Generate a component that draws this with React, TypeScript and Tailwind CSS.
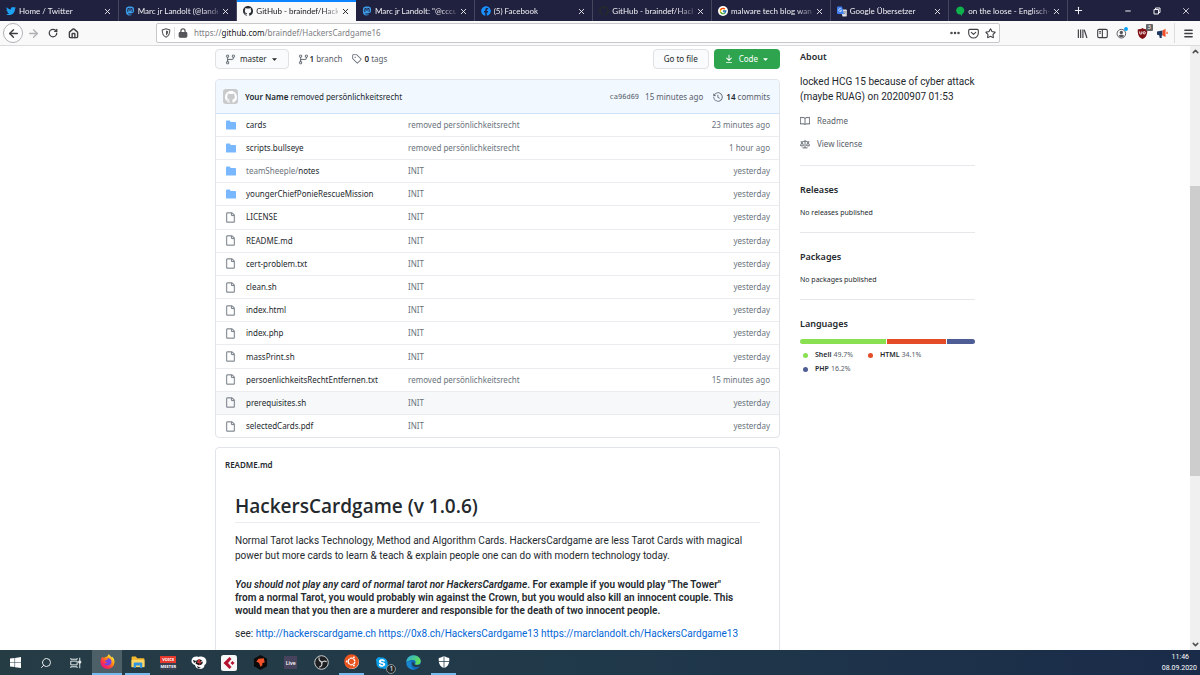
import type { ReactNode } from "react";
import { FaTwitter, FaMastodon, FaFacebook, FaSkype, FaUbuntu } from "react-icons/fa";
import { FcGoogle } from "react-icons/fc";
import {
  GoGitBranch,
  GoTag,
  GoFile,
  GoBook,
  GoLaw,
  GoHistory,
  GoFileDirectoryFill,
  GoTriangleDown,
} from "react-icons/go";
import {
  ArrowLeft,
  ArrowRight,
  ChevronDown,
  ChevronUp,
  Ellipsis,
  House,
  Lock,
  Menu,
  Minus,
  Plus,
  RotateCw,
  Search,
  Star,
  X,
} from "lucide-react";

function GithubMark({ className }: { className: string }) {
  return (
    <svg viewBox="0 0 16 16" className={className} fill="currentColor" aria-hidden="true">
      <path
        fillRule="evenodd"
        d="M8 0C3.580 0 0 3.580 0 8c0 3.540 2.290 6.530 5.470 7.590.4.070.55-.17.55-.38 0-.19-.01-.82-.01-1.490-2.010.37-2.530-.49-2.690-.94-.09-.23-.48-.94-.82-1.130-.28-.15-.68-.52-.01-.53.63-.01 1.080.58 1.230.82.72 1.210 1.870.87 2.330.66.070-.52.28-.87.51-1.070-1.780-.2-3.640-.89-3.640-3.950 0-.87.31-1.590.82-2.150-.08-.2-.36-1.020.08-2.120 0 0 .67-.21 2.200.82.64-.18 1.320-.27 2-.27s1.360.09 2 .27c1.530-1.040 2.200-.82 2.200-.82.44 1.100.16 1.920.08 2.120.51.56.82 1.270.82 2.150 0 3.070-1.870 3.750-3.650 3.950.29.25.54.73.54 1.480 0 1.070-.01 1.930-.01 2.200 0 .21.15.46.55.38A8.013 8.013 0 0 0 16 8c0-4.420-3.580-8-8-8z"
      />
    </svg>
  );
}

/* ---------- browser tabs ---------- */

function TranslateIcon() {
  return (
    <svg viewBox="0 0 20 20" className="size-[11px]" aria-hidden="true">
      <path d="M7 6h11a1.500 1.500 0 0 1 1.500 1.500v11a1.500 1.500 0 0 1-1.500 1.500H11z" fill="#dfe3e8" />
      <path d="M2 0h8l4 15H2a2 2 0 0 1-2-2V2a2 2 0 0 1 2-2z" fill="#3f7ef0" />
      <path d="M8.800 5.300A3 3 0 1 0 9.300 8H6.600" fill="none" stroke="#fff" strokeWidth="1.300" />
      <path d="M12.500 10.500h5.500M15.200 9v1.500M17 10.500c-.5 2.500-2 4-3.500 5M14 12c.8 1.800 2 3 3.500 3.800" fill="none" stroke="#6b7684" strokeWidth="1.100" />
    </svg>
  );
}

function SpeechIcon() {
  return (
    <svg viewBox="0 0 20 20" className="size-[10px]" aria-hidden="true">
      <path d="M10 1a8.500 8 0 0 1 5 14.500L13 20l-1.500-3A8.500 8 0 1 1 10 1z" fill="#0eb14b" />
    </svg>
  );
}

type Tab = { title: string; icon: ReactNode; active?: boolean };

const tabs: Tab[] = [
  { title: "Home / Twitter", icon: <FaTwitter className="size-[10px] text-[#1da1f2]" /> },
  { title: "Marc jr Landolt (@lande", icon: <FaMastodon className="size-[10px] text-[#3b9be6]" /> },
  { title: "GitHub - braindef/Hacke", icon: <GithubMark className="size-[10px] text-[#24292e]" />, active: true },
  { title: 'Marc jr Landolt: "@cccu', icon: <FaMastodon className="size-[10px] text-[#3b9be6]" /> },
  { title: "(5) Facebook", icon: <FaFacebook className="size-[10px] text-[#1890ff]" /> },
  { title: "GitHub - braindef/Hacke", icon: <GithubMark className="size-[10px] text-[#24292e]" /> },
  {
    title: "malware tech blog wann",
    icon: (
      <span className="flex size-[10px] items-center justify-center rounded-full bg-white">
        <FcGoogle className="size-[8px]" />
      </span>
    ),
  },
  { title: "Google Übersetzer", icon: <TranslateIcon /> },
  { title: "on the loose - Englisch-D", icon: <SpeechIcon /> },
];

function RestoreIcon() {
  return (
    <svg viewBox="0 0 8 8" className="size-[8px]" fill="none" stroke="currentColor" aria-hidden="true">
      <path d="M1 2.500h4.500V7H1zM2.500 2.500V1H7v4.500H5.500" />
    </svg>
  );
}

function TabStrip() {
  return (
    <div className="flex h-[21px] shrink-0 bg-[#20203f] font-['Lato',sans-serif] text-[#f1f1f5]">
      <div className="grid w-[89%] grid-cols-9" role="tablist">
        {tabs.map((tab, i) => (
          <div
            key={i}
            role="tab"
            aria-selected={!!tab.active}
            className={
              tab.active
                ? "flex min-w-0 items-center gap-[3px] border-t-2 border-[#0a84ff] bg-[#f9f9fa] pb-px pl-[6px] pr-[6px] text-[#15151a]"
                : "flex min-w-0 items-center gap-[3px] border-r border-[#46465f] pl-[6px] pr-[6px] pt-px"
            }
          >
            <span className="flex w-[10px] shrink-0 justify-center">{tab.icon}</span>
            <span className="min-w-0 flex-1 whitespace-nowrap [mask-image:linear-gradient(to_right,#000_80%,#0004)]">
              {tab.title}
            </span>
            <button type="button" aria-label="Close tab" className="shrink-0">
              <X className="size-[9px]" strokeWidth={2.400} />
            </button>
          </div>
        ))}
      </div>
      <button type="button" aria-label="New tab" className="flex w-5 items-center justify-center">
        <Plus className="size-[11px]" strokeWidth={2.200} />
      </button>
      <div className="ml-auto flex items-center">
        <button type="button" aria-label="Minimize" className="flex w-[29px] justify-center">
          <Minus className="size-[8px]" strokeWidth={3} />
        </button>
        <button type="button" aria-label="Restore" className="flex w-[29px] justify-center">
          <RestoreIcon />
        </button>
        <button type="button" aria-label="Close window" className="flex w-[29px] justify-center">
          <X className="size-[10px]" strokeWidth={2} />
        </button>
      </div>
    </div>
  );
}

/* ---------- navigation toolbar ---------- */

function ShieldIcon() {
  return (
    <svg viewBox="0 0 16 16" className="size-[10px]" aria-hidden="true">
      <path d="M8 1.300 14 3c.3 5.500-1.300 9.500-6 11.700C3.300 12.500 1.700 8.500 2 3z" fill="none" stroke="#55555a" strokeWidth="1.700" />
      <path d="M8 4v8c2.400-1.500 3.400-4 3.400-6.900z" fill="#55555a" />
    </svg>
  );
}

function PocketIcon() {
  return (
    <svg viewBox="0 0 16 16" className="size-[11px]" fill="none" stroke="currentColor" strokeWidth="1.600" strokeLinecap="round" strokeLinejoin="round" aria-hidden="true">
      <path d="M2.500 2h11A1.500 1.500 0 0 1 15 3.500V7.500a7 7 0 0 1-14 0V3.500A1.500 1.500 0 0 1 2.500 2z" />
      <path d="M4.800 6.300 8 9.300l3.200-3" />
    </svg>
  );
}

function LibraryIcon() {
  return (
    <svg viewBox="0 0 16 16" className="size-[11px]" fill="none" stroke="currentColor" strokeWidth="1.700" aria-hidden="true">
      <path d="M2 2v12.500M5.300 2v12.500M8.600 2v12.500M10.500 2.500l4 12" />
    </svg>
  );
}

function SidebarIcon() {
  return (
    <svg viewBox="0 0 16 16" className="size-[11px]" fill="none" stroke="currentColor" strokeWidth="1.600" aria-hidden="true">
      <rect x="1" y="2" width="14" height="12" rx="2" />
      <path d="M7.800 2v12M3.300 5h2.300M3.300 7.500h2.300" />
    </svg>
  );
}

function AccountIcon() {
  return (
    <svg viewBox="0 0 18 18" className="size-[12px]" aria-hidden="true">
      <circle cx="8" cy="10" r="6.500" fill="none" stroke="#55555a" strokeWidth="1.400" />
      <circle cx="8" cy="8.200" r="2.500" fill="#55555a" />
      <path d="M3.800 13.500c1-2.600 7.400-2.600 8.400 0-2 2.300-6.400 2.300-8.400 0z" fill="#55555a" />
      <circle cx="15" cy="3" r="2.900" fill="#00a3f5" />
    </svg>
  );
}

function BlockerIcon() {
  return (
    <svg viewBox="0 0 16 16" className="size-[11px]" aria-hidden="true">
      <path d="M8 0c2 1.500 4.500 2 7 2 0 7-1 11-7 14C2 13 1 9 1 2c2.500 0 5-.5 7-2z" fill="#800f14" />
      <path d="M4 5v2.500a1.500 1.500 0 0 0 3 0V5" fill="none" stroke="#fff" strokeWidth="1.300" />
      <circle cx="10.500" cy="7" r="1.700" fill="none" stroke="#fff" strokeWidth="1.300" />
    </svg>
  );
}

function MegaphoneIcon() {
  return (
    <svg viewBox="0 0 18 16" className="h-[10px] w-[11px]" aria-hidden="true">
      <path d="M0 5.500 9 4v8H7.500L8 16H4.500L3.500 11.500 0 11z" fill="#1e3a63" />
      <path d="M9 4 14 1v13.500L9 12z" fill="#f0502a" />
      <path d="M15 6h3v3.500h-3z" fill="#f58a6d" />
    </svg>
  );
}

function Toolbar() {
  return (
    <div className="flex h-[25px] shrink-0 items-center border-b border-[#dcdcde] bg-[#f9f9fa] pl-[3px] pr-[6px] text-[#3f3f44]">
      <button type="button" aria-label="Back" className="flex size-[20px] items-center justify-center rounded-full border border-[#b1b1b5] bg-white">
        <ArrowLeft className="size-[13px]" strokeWidth={2.600} />
      </button>
      <button type="button" aria-label="Forward" className="flex w-5 justify-center text-[#b0b0b3]">
        <ArrowRight className="size-[13px]" strokeWidth={2.400} />
      </button>
      <button type="button" aria-label="Reload" className="flex w-5 justify-center">
        <RotateCw className="size-[10px]" strokeWidth={3} />
      </button>
      <button type="button" aria-label="Home" className="flex w-5 justify-center">
        <House className="size-[11px]" strokeWidth={3} />
      </button>
      <div className="ml-[73px] flex h-[20px] min-w-0 flex-1 items-center rounded-[2px] border border-[#c8c8cb] bg-white pl-1 pr-px">
        <ShieldIcon />
        <span className="mx-[3px] h-3 w-px bg-[#e0e0e2]" />
        <Lock className="size-[10px] text-[#55555a] [&>rect]:fill-current" strokeWidth={3} />
        <button type="button" className="ml-[6px] flex-1 whitespace-nowrap text-left text-[8px] leading-3 text-[#7c7c82]">
          https://<span className="text-[#15151a]">github.com</span>/braindef/HackersCardgame16
        </button>
        <button type="button" aria-label="Page actions" className="flex w-[18px] justify-center">
          <Ellipsis className="size-[12px]" strokeWidth={3} />
        </button>
        <button type="button" aria-label="Save to Pocket" className="flex w-[18px] justify-center">
          <PocketIcon />
        </button>
        <button type="button" aria-label="Bookmark" className="flex w-[16px] justify-center">
          <Star className="size-[11px]" strokeWidth={2.400} />
        </button>
      </div>
      <div className="ml-[72px] flex items-center">
        <button type="button" aria-label="Library" className="flex w-5 justify-center"><LibraryIcon /></button>
        <button type="button" aria-label="Sidebars" className="flex w-5 justify-center"><SidebarIcon /></button>
        <button type="button" aria-label="Account" className="flex w-5 justify-center"><AccountIcon /></button>
        <button type="button" aria-label="Content blocker" className="relative flex w-5 justify-center">
          <BlockerIcon />
          <span className="absolute -right-px -top-1 rounded-[1px] bg-[#666] px-[2px] text-[6px] leading-[7px] text-white">3</span>
        </button>
        <button type="button" aria-label="Announcements" className="flex w-5 justify-center"><MegaphoneIcon /></button>
        <span className="ml-[2px] h-5 w-px bg-[#dddde0]" />
        <button type="button" aria-label="Menu" className="ml-[8px]">
          <Menu className="size-[11px]" strokeWidth={3} />
        </button>
      </div>
    </div>
  );
}

/* ---------- repository page ---------- */

type Entry = { dir?: boolean; prefix?: string; name: string; message: string; age: string; hovered?: boolean };

const entries: Entry[] = [
  { dir: true, name: "cards", message: "removed persönlichkeitsrecht", age: "23 minutes ago" },
  { dir: true, name: "scripts.bullseye", message: "removed persönlichkeitsrecht", age: "1 hour ago" },
  { dir: true, prefix: "teamSheeple/", name: "notes", message: "INIT", age: "yesterday" },
  { dir: true, name: "youngerChiefPonieRescueMission", message: "INIT", age: "yesterday" },
  { name: "LICENSE", message: "INIT", age: "yesterday" },
  { name: "README.md", message: "INIT", age: "yesterday" },
  { name: "cert-problem.txt", message: "INIT", age: "yesterday" },
  { name: "clean.sh", message: "INIT", age: "yesterday" },
  { name: "index.html", message: "INIT", age: "yesterday" },
  { name: "index.php", message: "INIT", age: "yesterday" },
  { name: "massPrint.sh", message: "INIT", age: "yesterday" },
  { name: "persoenlichkeitsRechtEntfernen.txt", message: "removed persönlichkeitsrecht", age: "15 minutes ago" },
  { name: "prerequisites.sh", message: "INIT", age: "yesterday", hovered: true },
  { name: "selectedCards.pdf", message: "INIT", age: "yesterday" },
];

function DownloadIcon() {
  return (
    <svg viewBox="0 0 16 16" className="size-[10px]" fill="currentColor" aria-hidden="true">
      <path d="M7.470 10.780a.75.75 0 0 0 1.060 0l3.750-3.750a.75.75 0 0 0-1.060-1.060L8.750 8.440V1.750a.75.75 0 0 0-1.500 0v6.690L4.780 5.970a.75.75 0 0 0-1.060 1.060l3.750 3.750zM3.750 13a.75.75 0 0 0 0 1.500h8.500a.75.75 0 0 0 0-1.500h-8.500z" />
    </svg>
  );
}

function RepoActions() {
  return (
    <div className="flex items-center">
      <button type="button" className="flex h-[20px] items-center rounded-[4px] border border-[#dfe1e4] bg-[#fafbfc] px-[9px]">
        <GoGitBranch className="size-[11px] stroke-current text-[#586069] [stroke-width:0.4]" />
        <span className="ml-[4px]">master</span>
        <GoTriangleDown className="ml-[3px] size-[9px]" />
      </button>
      <a href="#branches" className="ml-[9px] flex items-center text-[#586069]">
        <GoGitBranch className="mr-px size-[11px] stroke-current [stroke-width:0.4]" />
        <span><strong className="font-semibold text-[#24292e]">1</strong> branch</span>
      </a>
      <a href="#tags" className="ml-[10px] flex items-center text-[#586069]">
        <GoTag className="mr-[2px] size-[10px] stroke-current [stroke-width:0.4]" />
        <span><strong className="font-semibold text-[#24292e]">0</strong> tags</span>
      </a>
      <button type="button" className="ml-auto h-[20px] rounded-[4px] border border-[#dfe1e4] bg-[#fafbfc] px-[10px]">
        Go to file
      </button>
      <button type="button" className="ml-[5px] flex h-[20px] items-center rounded-[4px] bg-[#2ea44f] px-[10px] text-white">
        <DownloadIcon />
        <span className="ml-[5px]">Code</span>
        <GoTriangleDown className="ml-[3px] size-[9px]" />
      </button>
    </div>
  );
}

function FileBrowser() {
  return (
    <section className="mt-[10px] overflow-hidden rounded-[4px] border border-[#e1e4e8]">
      <div className="flex h-[34px] items-center border-b border-[#cfe3f8] bg-[#f1f8ff] pl-[7px] pr-[9px]">
        <span className="mr-[7px] flex size-[15px] items-center justify-center rounded-[3px] bg-[#c9cacb] text-white">
          <GithubMark className="size-[12px]" />
        </span>
        <span>
          <a href="#author" className="font-semibold">Your Name</a> <a href="#commit">removed persönlichkeitsrecht</a>
        </span>
        <a href="#ca96d69" className="ml-auto font-['DejaVu_Sans_Mono',monospace] text-[7px] text-[#586069]">ca96d69</a>
        <span className="ml-[6px] text-[#586069]">15 minutes ago</span>
        <a href="#commits" className="ml-[10px] flex items-center text-[#586069]">
          <GoHistory className="mr-[3px] size-[10px] stroke-current [stroke-width:0.4]" />
          <span><strong className="font-semibold text-[#24292e]">14</strong> commits</span>
        </a>
      </div>
      <table className="h-[323px] w-full table-fixed border-collapse">
        <tbody>
          {entries.map((entry) => (
            <tr
              key={entry.name}
              className={
                entry.hovered
                  ? "border-t border-[#eaecef] bg-[#f6f8fa]"
                  : "border-t border-[#eaecef] first:border-t-0"
              }
            >
              <td className="w-[30px] py-0 pl-[9px]">
                {entry.dir ? (
                  <GoFileDirectoryFill className="size-[12px] text-[#79b8ff]" />
                ) : (
                  <GoFile className="size-[11px] stroke-current text-[#6a737d] [stroke-width:0.5]" />
                )}
              </td>
              <td className="w-[162px] p-0">
                <a href={"#" + entry.name}>
                  {entry.prefix && <span className="text-[#6a737d]">{entry.prefix}</span>}
                  {entry.name}
                </a>
              </td>
              <td className="p-0 text-[#6a737d]">{entry.message}</td>
              <td className="w-[110px] py-0 pr-[9px] text-right text-[#6a737d]">{entry.age}</td>
            </tr>
          ))}
        </tbody>
      </table>
    </section>
  );
}

function Readme() {
  return (
    <section className="mt-[9px] rounded-t-[4px] border border-[#e1e4e8]">
      <h2 className="px-[9px] pt-[11px] text-[8px] font-semibold leading-3">README.md</h2>
      <article className="px-[19px] pb-10 pt-[23px] font-['Roboto',sans-serif] text-[10px] leading-[15px]">
        <h1 className="border-b border-[#eaecef] pb-[4px] font-['Open_Sans',sans-serif] text-[19px] font-semibold leading-6">
          HackersCardgame (v 1.0.6)
        </h1>
        <p className="mt-[10px]">
          Normal Tarot lacks Technology, Method and Algorithm Cards. HackersCardgame are less Tarot Cards with magical
          <br />
          power but more cards to learn &amp; teach &amp; explain people one can do with modern technology today.
        </p>
        <p className="mt-[15px] font-semibold leading-[13px]">
          <em>You should not play any card of normal tarot nor HackersCardgame</em>. For example if you would play "The Tower"
          <br />
          from a normal Tarot, you would probably win against the Crown, but you would also kill an innocent couple. This
          <br />
          would mean that you then are a murderer and responsible for the death of two innocent people.
        </p>
        <p className="mt-[9px]">
          see:{" "}
          <a href="#site" className="text-[#0366d6]">http://hackerscardgame.ch</a>{" "}
          <a href="#mirror" className="text-[#0366d6]">https://0x8.ch/HackersCardgame13</a>{" "}
          <a href="#author-site" className="text-[#0366d6]">https://marclandolt.ch/HackersCardgame13</a>
        </p>
      </article>
    </section>
  );
}

const languages = [
  { name: "Shell", share: 49.7, bar: "bg-[#89e051]" },
  { name: "HTML", share: 34.1, bar: "bg-[#e34c26]" },
  { name: "PHP", share: 16.2, bar: "bg-[#4f5d95]" },
];

function Sidebar() {
  return (
    <aside className="w-[175px] shrink-0">
      <section className="border-b border-[#e6e8eb] pb-[15px]">
        <h2 className="text-[9px] font-semibold leading-[15px]">About</h2>
        <p className="mt-[10px] whitespace-nowrap font-['Roboto',sans-serif] text-[10px] leading-[15px]">
          locked HCG 15 because of cyber attack
          <br />
          (maybe RUAG) on 20200907 01:53
        </p>
        <a href="#readme" className="mt-[10px] flex items-center gap-[7px] leading-[13px] text-[#586069]">
          <GoBook className="size-[10px] stroke-current [stroke-width:0.4]" />
          Readme
        </a>
        <a href="#license" className="mt-[10px] flex items-center gap-[7px] leading-[13px] text-[#586069]">
          <GoLaw className="size-[10px] stroke-current [stroke-width:0.4]" />
          View license
        </a>
      </section>
      <section className="border-b border-[#e6e8eb] pb-[14px] pt-[16px]">
        <h2 className="text-[9px] font-semibold leading-[15px]">Releases</h2>
        <p className="mt-[10px] text-[7px] leading-[11px]">No releases published</p>
      </section>
      <section className="border-b border-[#e6e8eb] pb-[14px] pt-[16px]">
        <h2 className="text-[9px] font-semibold leading-[15px]">Packages</h2>
        <p className="mt-[10px] text-[7px] leading-[11px]">No packages published</p>
      </section>
      <section className="pt-[16px]">
        <h2 className="text-[9px] font-semibold leading-[15px]">Languages</h2>
        <div className="mt-[8px] flex h-[5px] gap-px overflow-hidden rounded-full">
          {languages.map((l) => (
            <span key={l.name} className={l.bar} style={{ width: l.share + "%" }} />
          ))}
        </div>
        <ul className="mt-[4px] flex flex-wrap text-[7px] leading-[14px]">
          {languages.map((l) => (
            <li key={l.name} className="mr-[9px] flex w-[56px] items-center whitespace-nowrap">
              <span className={"ml-[3px] mr-[7px] size-[5px] shrink-0 rounded-full " + l.bar} />
              <span className="mr-[2px] font-semibold">{l.name}</span>
              <span className="text-[#586069]">{l.share}%</span>
            </li>
          ))}
        </ul>
      </section>
    </aside>
  );
}

/* ---------- taskbar ---------- */

function WindowsIcon() {
  return (
    <svg viewBox="0 0 16 16" className="size-[11px]" fill="#fff" aria-hidden="true">
      <path d="M0 2.300 6.600 1.400v6.200H0zM7.400 1.300 16 0v7.600H7.400zM0 8.400h6.600v6.200L0 13.700zM7.400 8.400H16V16l-8.600-1.200z" />
    </svg>
  );
}

function TaskViewIcon() {
  return (
    <svg viewBox="0 0 16 16" className="size-[12px]" fill="none" stroke="#e8ecee" strokeWidth="1.300" aria-hidden="true">
      <path d="M1 5.500h8.500v5H1zM1 1.500V3h8.500V1.500M1 14.500V13h8.500v1.500M13 1v14" />
      <path d="M11.700 5.500h2.600v2.500h-2.600z" fill="#e8ecee" />
    </svg>
  );
}

function FirefoxIcon() {
  return (
    <svg viewBox="0 0 32 32" className="size-[15px]" aria-hidden="true">
      <defs>
        <linearGradient id="fx" x1="0.850" y1="0.100" x2="0.150" y2="0.900">
          <stop offset="0" stopColor="#fff44f" />
          <stop offset="0.350" stopColor="#ff980e" />
          <stop offset="0.700" stopColor="#ff3647" />
          <stop offset="1" stopColor="#e31587" />
        </linearGradient>
      </defs>
      <path d="M5 6c1 1.500 2 2 3 2.200C10 6.500 12 6 14 6c2-1 3-3 4.500-6 2 3 5 5 6.500 7.500.5-.5.500-1 .5-2C29.500 9 31 13 31 17a15 15 0 0 1-30 0C1 12.500 3 9 5 6z" fill="url(#fx)" />
      <path d="M16 9c5-1 9 3 8.500 8a8.500 8.500 0 0 1-16.500 2c3 2 6 1.500 8-.5-2-.5-4-1-5-3 0-2 2-2 5-3z" fill="#7542e5" />
    </svg>
  );
}

function ExplorerIcon() {
  return (
    <svg viewBox="0 0 32 28" className="h-[12px] w-[14px]" aria-hidden="true">
      <path d="M1 3a2 2 0 0 1 2-2h8l3 4h15a2 2 0 0 1 2 2v18H1z" fill="#f5b92e" />
      <path d="M1 9h30v17H1z" fill="#ffd766" />
      <path d="M6 28V17a2 2 0 0 1 2-2h16a2 2 0 0 1 2 2v11h-5v-6H11v6z" fill="#2f95e0" />
    </svg>
  );
}

function VoicemeeterIcon() {
  return (
    <span className="flex w-[16px] flex-col text-center text-[4px] font-bold leading-[7px] text-white">
      <span className="bg-[#e5392d]">VOICE</span>
      <span className="bg-[#3a3f52]">MEETER</span>
    </span>
  );
}

function SplashIcon() {
  return (
    <svg viewBox="0 0 32 28" className="h-[14px] w-[16px]" aria-hidden="true">
      <path d="M2 6c3-5 8-6 13-4 6-2 13 0 15 5 2 6 0 9-3 11 0 5-4 8-9 8s-9-3-10-8C3 17-1 12 2 6z" fill="#fff" />
      <path d="M11 9c4-3 9-2 12 1 2 4-1 7-4 8-4 1-8-1-10-3z" fill="#17191c" />
      <path d="M14 7l-2 7h5l-2 6 7-9h-5l2-4z" fill="#c8383a" />
      <path d="M4 8l7 2-5 4zM12 20l8 4-6 1z" fill="#17191c" />
      <path d="M20 10l4-1-2 4z" fill="#fff" />
    </svg>
  );
}

function CubaseIcon() {
  return (
    <svg viewBox="0 0 32 32" className="size-[16px]" aria-hidden="true">
      <rect width="32" height="32" rx="5" fill="#f7f7f7" />
      <path d="M17 4 5 16l12 12 4-4-7-8 7-8z" fill="#b5122f" />
      <path d="M19 16l4-4 4 4-4 4z" fill="#b5122f" />
    </svg>
  );
}

function ReaperIcon() {
  return (
    <svg viewBox="0 0 32 32" className="size-[15px]" aria-hidden="true">
      <path d="M16 0 30 8v16l-14 8L2 24V8z" fill="#0b0b0c" />
      <path d="M7 14l5-6 11-1 2 9-5 1v5l-4 3-3-8z" fill="#f0522a" />
    </svg>
  );
}

function ObsIcon() {
  return (
    <svg viewBox="0 0 32 32" className="size-[15px]" aria-hidden="true">
      <circle cx="16" cy="16" r="14.500" fill="#1d1f22" stroke="#d5d5d5" strokeWidth="2" />
      <g fill="none" stroke="#d0d0d0" strokeWidth="2.600">
        <path d="M11 5c-1 5 1 9 6 10" />
        <path d="M27 14c-5-2-9-1-11 4" />
        <path d="M11 26c5-1 7-5 5-10" />
      </g>
    </svg>
  );
}

function UbuntuIcon() {
  return (
    <span className="flex size-[14px] items-center justify-center rounded-full bg-white">
      <FaUbuntu className="size-[15px] shrink-0 text-[#e9541f]" />
    </span>
  );
}

function SkypeIcon() {
  return (
    <span className="relative flex">
      <FaSkype className="size-[14px] rounded-full bg-[radial-gradient(circle,#fff_50%,transparent_51%)] text-[#0c9fe8]" />
      <span className="absolute -bottom-1 -right-[7px] flex size-[10px] items-center justify-center rounded-full border border-[#8b9598] bg-[#22282c] text-[7px] leading-none text-white">
        1
      </span>
    </span>
  );
}

function EdgeIcon() {
  return (
    <svg viewBox="0 0 32 32" className="size-[15px]" aria-hidden="true">
      <defs>
        <linearGradient id="edgeTop" x1="0" y1="0" x2="1" y2="0.400">
          <stop offset="0" stopColor="#2aa8e0" />
          <stop offset="1" stopColor="#5fe05a" />
        </linearGradient>
      </defs>
      <circle cx="16" cy="16" r="15.500" fill="#1168b8" />
      <path d="M.5 16C1 7 7 .5 16 .5S31.500 7 31.500 13.500c0 5-4 7.500-8 7.500-4.500 0-5-2-3.500-3.500 2-2.500 0-7-5-7C8 10.500 1 14 .5 16z" fill="url(#edgeTop)" />
      <path d="M13 16c-1 8 6 12 15 8.500l3-2 1-4c-2 2-5 3-8.500 3-4.500 0-6.500-2-5.500-5z" fill="#263c46" />
      <path d="M11 15c-2 9 4 15 10 15.500-9 2.500-18-3-20-11C2 13 8 12 11 15z" fill="#1b86d0" />
    </svg>
  );
}

function DefenderIcon() {
  return (
    <svg viewBox="0 0 16 16" className="size-[12px]" fill="#fff" aria-hidden="true">
      <path d="M7.500 0v7H1V2.500C3.500 2.500 5.500 1.500 7.500 0zM8.500 0v7H15V2.500C12.500 2.500 10.500 1.500 8.500 0zM7.500 8v8C4 14.300 1.800 12 1.100 8zM8.500 8v8c3.500-1.700 5.700-4 6.400-8z" />
    </svg>
  );
}

type Task = { label: string; icon: ReactNode; state?: "running" | "active" };

const tasks: Task[] = [
  { label: "Start", icon: <WindowsIcon /> },
  { label: "Search", icon: <Search className="size-[12px] -scale-x-100 text-[#e8ecee]" strokeWidth={2} /> },
  { label: "Task view", icon: <TaskViewIcon /> },
  { label: "Firefox", icon: <FirefoxIcon />, state: "active" },
  { label: "Explorer", icon: <ExplorerIcon />, state: "running" },
  { label: "Voicemeeter", icon: <VoicemeeterIcon /> },
  { label: "Lightning", icon: <SplashIcon /> },
  { label: "Cubase", icon: <CubaseIcon /> },
  { label: "Reaper", icon: <ReaperIcon /> },
  {
    label: "Ableton",
    icon: <span className="flex h-[13px] w-[13px] items-center justify-center bg-[#47435c] text-[5px] font-semibold text-white">Live</span>,
  },
  { label: "OBS Studio", icon: <ObsIcon /> },
  { label: "Ubuntu", icon: <UbuntuIcon />, state: "running" },
  { label: "Skype", icon: <SkypeIcon /> },
  { label: "Edge", icon: <EdgeIcon /> },
  { label: "Windows Security", icon: <DefenderIcon />, state: "running" },
];

function Taskbar() {
  return (
    <footer className="flex h-[25px] shrink-0 bg-[linear-gradient(to_right,#263c45,#20394a_50%,#1a2b49)] text-white">
      <div className="grid w-[38.25%] grid-cols-15">
        {tasks.map((task) => (
          <button
            key={task.label}
            type="button"
            aria-label={task.label}
            className={
              task.state === "active"
                ? "flex flex-col items-center bg-[#4d5f67]"
                : "flex flex-col items-center"
            }
          >
            <span className="flex flex-1 items-center">{task.icon}</span>
            <span
              className={
                task.state === "active"
                  ? "h-[2px] w-full bg-[#76b9ed]"
                  : task.state === "running"
                    ? "h-[2px] w-[25px] bg-[#76b9ed]"
                    : "h-0"
              }
            />
          </button>
        ))}
      </div>
      <time className="ml-auto flex flex-col items-end justify-center pr-[3px] font-['Roboto',sans-serif] text-[7px] leading-[11px]">
        <span className="pr-[8px]">11:46</span>
        <span>08.09.2020</span>
      </time>
    </footer>
  );
}

export default function App() {
  return (
    <div className="flex h-screen flex-col overflow-hidden bg-white font-['Noto_Sans','Open_Sans',sans-serif] text-[8px] leading-[12px] text-[#24292e]">
      <TabStrip />
      <Toolbar />
      <div className="flex min-h-0 flex-1">
        <main className="min-w-0 flex-1 overflow-hidden">
          <div className="mx-auto flex max-w-[760px] gap-5 pt-[3px]">
            <div className="min-w-0 flex-1">
              <RepoActions />
              <FileBrowser />
              <Readme />
            </div>
            <Sidebar />
          </div>
        </main>
        <div className="flex w-[10px] shrink-0 flex-col items-center bg-[#f0f0f0] text-[#505050]">
          <ChevronUp className="mt-px size-[9px]" strokeWidth={4} />
          <div className="h-[130px]" />
          <div className="h-[48%] w-full bg-[#cdcdcd]" />
          <ChevronDown className="mb-px mt-auto size-[9px]" strokeWidth={4} />
        </div>
      </div>
      <Taskbar />
    </div>
  );
}
